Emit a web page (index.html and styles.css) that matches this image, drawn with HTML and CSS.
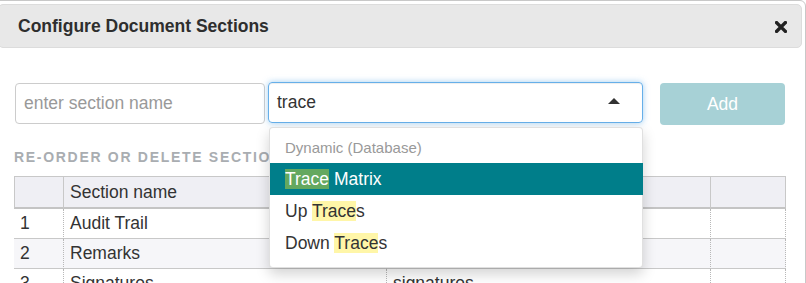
FILE: index.html
```html
<!DOCTYPE html>
<html lang="en">
<head>
    <meta charset="UTF-8">
    <title>Configure Document Sections</title>
    <link rel="stylesheet" href="styles.css">
</head>
<body>
    <div class="modal">
        <div class="modal-header">
            <h4 class="modal-title">Configure Document Sections</h4>
            <span class="close" title="Close">
                <svg width="12" height="12" viewBox="0 0 12 12">
                    <path d="M1.6 1.6 L10.4 10.4 M10.4 1.6 L1.6 10.4" stroke="#222" stroke-width="3.4" stroke-linecap="square"/>
                </svg>
            </span>
        </div>
        <div class="modal-body">
            <div class="add-row">
                <input class="name-input" type="text" placeholder="enter section name">
                <div class="select-wrap">
                    <div class="select-box">
                        <span class="select-value">trace</span>
                        <span class="caret-up"></span>
                    </div>
                    <div class="dropdown">
                        <div class="group-label">Dynamic (Database)</div>
                        <div class="option active"><span class="match">Trace</span> Matrix</div>
                        <div class="option">Up <span class="match">Trace</span>s</div>
                        <div class="option">Down <span class="match">Trace</span>s</div>
                    </div>
                </div>
                <button class="add-btn">Add</button>
            </div>

            <p class="section-heading">Re-order or delete sections</p>

            <table class="sections">
                <colgroup>
                    <col class="col-num">
                    <col class="col-name">
                    <col class="col-key">
                    <col class="col-action">
                </colgroup>
                <thead>
                    <tr>
                        <th></th>
                        <th>Section name</th>
                        <th>Key</th>
                        <th></th>
                    </tr>
                </thead>
                <tbody>
                    <tr>
                        <td>1</td>
                        <td>Audit Trail</td>
                        <td>audit_trail</td>
                        <td></td>
                    </tr>
                    <tr>
                        <td>2</td>
                        <td>Remarks</td>
                        <td>remarks</td>
                        <td></td>
                    </tr>
                    <tr>
                        <td>3</td>
                        <td>Signatures</td>
                        <td>signatures</td>
                        <td></td>
                    </tr>
                </tbody>
            </table>
        </div>
    </div>
</body>
</html>
```

FILE: styles.css
```css
html, body {
    margin: 0;
    padding: 0;
    overflow: hidden;
    background: #fff;
}
body {
    font-family: 'Liberation Sans', Arial, sans-serif;
    font-size: 17.5px;
    color: #333;
}
.modal {
    margin-left: -6px;
    width: 812px;
    box-sizing: border-box;
    padding: 3px;
    border: 1px solid #c8c8c8;
    border-radius: 6px;
    height: 300px;
}
.modal-header {
    height: 44px;
    box-sizing: border-box;
    display: flex;
    align-items: center;
    justify-content: space-between;
    padding: 0 14px 0 19px;
    background: #e8e8e8;
    border: 1px solid #dcdcdc;
    border-radius: 5px;
}
.modal-title {
    margin: 0;
    font-size: 17.5px;
    font-weight: 700;
    color: #2e2e2e;
}
.close {
    display: flex;
    width: 12px;
    height: 12px;
    margin-top: 2px;
    cursor: pointer;
}
.modal-body {
    padding: 34px 16px 0 16px;
}
.add-row {
    display: flex;
    align-items: flex-start;
    margin-left: 1px;
}
.name-input {
    width: 250px;
    height: 41px;
    margin: 1px 3px 0 0;
    box-sizing: border-box;
    padding: 0 8px;
    border: 1px solid #ccc;
    border-radius: 4px;
    font-family: inherit;
    font-size: 17.5px;
    color: #333;
    outline: none;
}
.name-input::placeholder {
    color: #999;
}
.select-wrap {
    position: relative;
    width: 375px;
    margin-right: 17px;
}
.select-box {
    height: 41px;
    box-sizing: border-box;
    display: flex;
    align-items: center;
    padding: 0 22px 0 8px;
    border: 1px solid #66afe9;
    border-radius: 4px;
    box-shadow: inset 0 1px 1px rgba(0, 0, 0, 0.075), 0 0 6px rgba(102, 175, 233, 0.6);
}
.select-value {
    flex: 1;
}
.caret-up {
    width: 0;
    height: 0;
    border-left: 6px solid transparent;
    border-right: 6px solid transparent;
    border-bottom: 6px solid #333;
    margin-bottom: 3px;
}
.dropdown {
    position: absolute;
    top: 45px;
    left: 1px;
    width: 374px;
    box-sizing: border-box;
    padding-bottom: 8px;
    background: #fff;
    border: 1px solid rgba(0, 0, 0, 0.12);
    border-radius: 4px;
    box-shadow: 0 6px 14px rgba(0, 0, 0, 0.18);
    z-index: 10;
}
.group-label {
    padding: 10px 15px 5px;
    line-height: 20px;
    font-size: 15px;
    color: #999;
}
.option {
    height: 32px;
    line-height: 32px;
    padding-left: 15px;
    color: #333;
}
.option.active {
    background: #007e8a;
    color: #fff;
    margin-right: -1px;
}
.match {
    background: #fff6a8;
}
.option.active .match {
    background: #64a85f;
}
.add-btn {
    width: 125px;
    height: 42px;
    margin-top: 1px;
    border: none;
    border-radius: 4px;
    background: #a7d1d6;
    color: #fff;
    font-family: inherit;
    font-size: 17.5px;
}
.section-heading {
    margin: 22px 0 9px 0;
    line-height: 20px;
    font-size: 14px;
    font-weight: 700;
    text-transform: uppercase;
    letter-spacing: 1.7px;
    color: #a9adb1;
}
.sections {
    width: 772px;
    table-layout: fixed;
    border-collapse: separate;
    border-spacing: 0;
}
.col-num { width: 50px; }
.col-name { width: 323px; }
.col-key { width: 324px; }
.col-action { width: 75px; }

.sections th {
    height: 30px;
    padding: 0 6px;
    text-align: left;
    font-weight: 400;
    background: #efeff4;
    border-top: 1px solid #c8c8c8;
    border-right: 1px solid #c8c8c8;
    border-bottom: 2px solid #c4c4c4;
}
.sections th:first-child {
    border-left: 1px solid #c8c8c8;
}
.sections td {
    height: 29px;
    padding: 0 6px;
    white-space: nowrap;
    border-right: 1px dotted #b8b8b8;
    border-bottom: 1px solid #c8c8c8;
}
.sections tbody tr:nth-child(even) td {
    background: #f6f6f9;
}
```
